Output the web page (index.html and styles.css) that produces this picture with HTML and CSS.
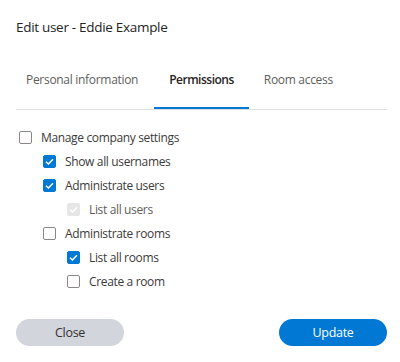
FILE: index.html
```html
<!doctype html>
<html lang="en">
  <head>
    <meta charset="UTF-8" />
    <meta name="viewport" content="width=device-width, initial-scale=1.0" />
    <title>Edit user</title>
    <link rel="stylesheet" href="styles.css">
  </head>
  <body>
    <div class="dialog">
      <div class="title">Edit user - Eddie Example</div>

      <div class="tabs">
        <div class="tab">Personal information</div>
        <div class="tab active">Permissions</div>
        <div class="tab">Room access</div>
      </div>

      <div class="perms">
        <label class="perm level-1">
          <span class="box"></span>
          <span>Manage company settings</span>
        </label>
        <label class="perm level-2">
          <span class="box checked">
            <svg viewBox="0 0 13 13"><path d="M3 6.8 L5.4 9 L10 4.2" /></svg>
          </span>
          <span>Show all usernames</span>
        </label>
        <label class="perm level-2">
          <span class="box checked">
            <svg viewBox="0 0 13 13"><path d="M3 6.8 L5.4 9 L10 4.2" /></svg>
          </span>
          <span>Administrate users</span>
        </label>
        <label class="perm level-3">
          <span class="box disabled">
            <svg viewBox="0 0 13 13"><path d="M3 6.8 L5.4 9 L10 4.2" /></svg>
          </span>
          <span>List all users</span>
        </label>
        <label class="perm level-2">
          <span class="box"></span>
          <span>Administrate rooms</span>
        </label>
        <label class="perm level-3">
          <span class="box checked">
            <svg viewBox="0 0 13 13"><path d="M3 6.8 L5.4 9 L10 4.2" /></svg>
          </span>
          <span>List all rooms</span>
        </label>
        <label class="perm level-3">
          <span class="box"></span>
          <span>Create a room</span>
        </label>
      </div>

      <div class="actions">
        <button class="btn btn-close">Close</button>
        <button class="btn btn-update">Update</button>
      </div>
    </div>
  </body>
</html>
```

FILE: styles.css
```css
body {
  margin: 0;
  background-color: #fff;
  font-family: "Segoe UI", "Open Sans", sans-serif;
  color: #323130;
}

.dialog {
  width: 371px;
  padding: 0 13px 0 16px;
}

.title {
  margin-top: 17px;
  font-size: 13.5px;
  line-height: 20px;
  letter-spacing: -0.3px;
  color: #252423;
}

.tabs {
  display: flex;
  margin-top: 17px;
  border-bottom: 1px solid #e1dfdd;
}

.tab {
  padding: 16px 15px 17px;
  font-size: 12px;
  line-height: 20px;
  letter-spacing: -0.3px;
  color: #605e5c;
  border-bottom: 2px solid transparent;
}

.tab:first-child {
  margin-left: -5px;
  padding-right: 16px;
}

.tab.active {
  font-weight: 600;
  letter-spacing: -0.5px;
  color: #252423;
  border-bottom-color: #0078d4;
}

.perms {
  margin-top: 15px;
}

.perm {
  display: flex;
  align-items: center;
  gap: 9px;
  height: 24px;
  font-size: 12px;
  letter-spacing: -0.35px;
  color: #3b3a39;
}

.level-1 {
  padding-left: 3px;
}

.level-2 {
  padding-left: 27px;
}

.level-3 {
  padding-left: 51px;
}

.box {
  box-sizing: border-box;
  width: 13px;
  height: 13px;
  border: 1px solid #8a8886;
  border-radius: 2px;
  display: flex;
}

.box svg {
  width: 13px;
  height: 13px;
  margin: -1px;
}

.box path {
  fill: none;
  stroke: #fff;
  stroke-width: 1.5;
}

.box.checked {
  background-color: #0078d4;
  border-color: #0078d4;
}

.box.disabled {
  background-color: #e6e6e6;
  border-color: #e6e6e6;
}

.perm:has(.disabled) {
  color: #605e5c;
}

.actions {
  display: flex;
  justify-content: space-between;
  margin-top: 26px;
}

.btn {
  width: 108px;
  height: 27px;
  border: none;
  border-radius: 14px;
  font-family: inherit;
  font-size: 12.5px;
  letter-spacing: -0.3px;
}

.btn-close {
  background-color: #d2d5dc;
  color: #323130;
}

.btn-update {
  background-color: #0078d4;
  color: #fff;
}
```
